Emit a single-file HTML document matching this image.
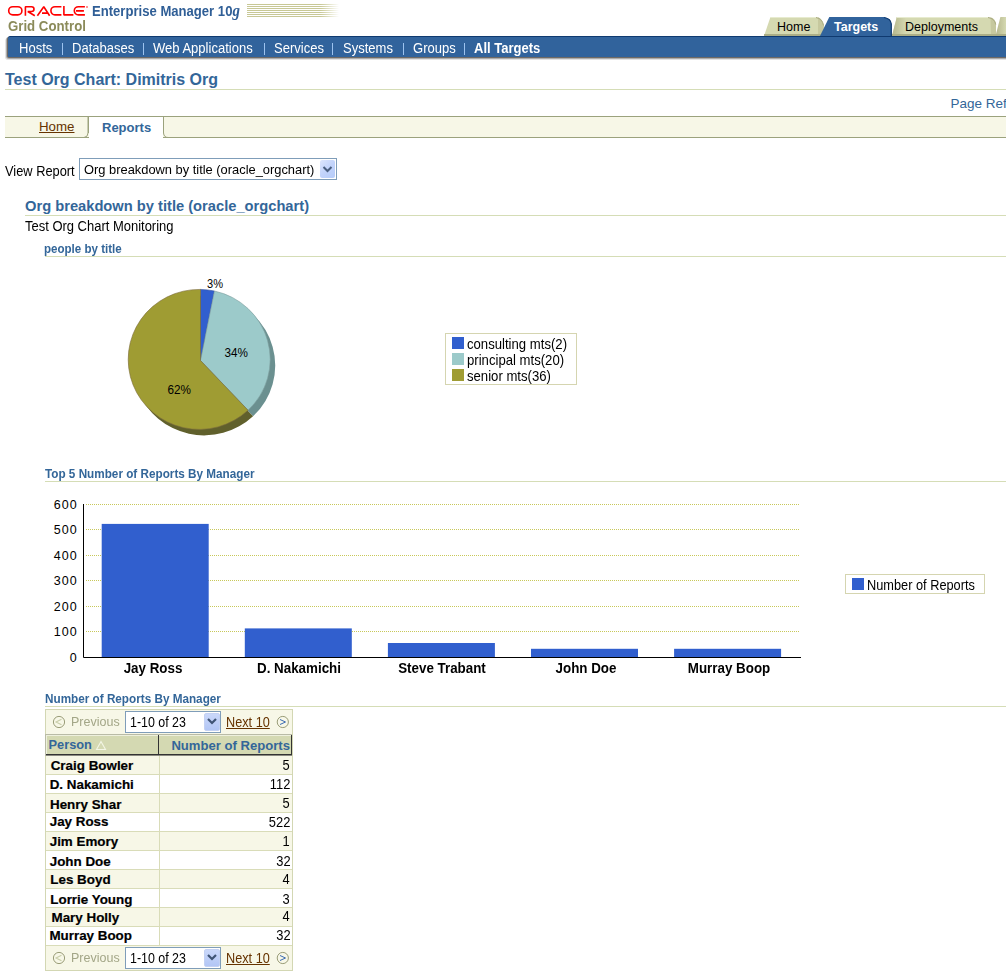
<!DOCTYPE html>
<html><head><meta charset="utf-8">
<style>
*{box-sizing:border-box}
html,body{margin:0;padding:0;background:#fff;width:1006px;height:976px;overflow:hidden;position:relative}
body{font-family:"Liberation Sans",sans-serif;font-size:13px;color:#000}
.a{position:absolute;white-space:nowrap;line-height:1}
.blue{color:#336699}
.b{font-weight:bold}
.nav{color:#fff;font-size:14px;top:41px;transform:scaleX(.93);transform-origin:0 0}
.sep{position:absolute;top:43px;width:1px;height:12px;background:#9dc3ef}
svg{position:absolute;left:0;top:0}
.pl{font-size:11.5px}
.lg{font-size:14.6px;transform:scaleX(.9);transform-origin:0 0}
.yl{font-size:12.5px;letter-spacing:1px}
.xl{font-size:14px;transform:scaleX(.955);transform-origin:50% 0}
</style></head><body>

<!-- ORACLE logo -->
<svg width="100" height="20" style="left:0;top:0">
<g stroke="#ff0000" stroke-width="1.6" fill="none" stroke-linejoin="bevel">
<rect x="8.7" y="6.7" width="13.2" height="8.2" rx="4.1"/>
<path d="M25.4 15.7 V6.7 H31.6 A2.4 2.4 0 0 1 31.6 11.5 H27.8 L34.8 15.7"/>
<path d="M37.4 15.7 L43.8 6.7 L49.6 15.7 M42 13.1 H47.6"/>
<path d="M61.4 6.7 H55 A4.1 4.1 0 0 0 55 14.9 H61.4"/>
<path d="M63.9 5.9 V14.9 H73.4"/>
<path d="M84.9 6.7 H78.4 A4.1 4.1 0 0 0 78.4 14.9 H84.9 M76 10.9 H83.9"/>
</g>
<circle cx="87" cy="7" r="0.9" fill="#ff6060"/>
</svg>
<div class="a b" style="left:92px;top:3px;font-size:14px;color:#2f5e96;transform:scaleX(.935);transform-origin:0 0">Enterprise Manager 10<i style="font-family:'Liberation Serif',serif;font-size:16px">g</i></div>
<div class="a b" style="left:8px;top:19px;font-size:14px;color:#8b8b5a;transform:scaleX(.945);transform-origin:0 0">Grid Control</div>
<!-- stripes -->
<div class="a" style="left:247px;top:4px;width:92px;height:13px;background:repeating-linear-gradient(#c8c896 0 1px,#fff 1px 2px);-webkit-mask-image:linear-gradient(90deg,#000 80%,transparent)"></div>

<!-- global tabs -->
<svg width="1006" height="60">
 <defs>
  <linearGradient id="lb" x1="0" x2="1"><stop offset="0" stop-color="#b5b68c"/><stop offset="1" stop-color="#d5d9b1"/></linearGradient>
 </defs>
 <path d="M764 36 L770.3 17.6 Q770.6 17 771.5 17 L816 17 Q822.5 18.5 823.8 25.5 L823.8 36 Z" fill="#d5d9b1"/>
 <path d="M818 17.3 Q822.5 18.5 823.8 25.5 L823.8 36 L818 36 Z" fill="#c6c89e"/>
 <path d="M816 17.5 Q822.5 18.8 823.5 25.5" stroke="#a9aa80" fill="none" stroke-width="1"/>
 <rect x="771" y="17" width="45" height="1" fill="#e7ebcf"/>
 <path d="M892 36 L896.8 17 L988 17 Q995 18.2 996 24.5 L996 36 Z" fill="#d5d9b1"/>
 <path d="M892 36 L896.8 17 L906 17 L906 36 Z" fill="url(#lb)"/>
 <path d="M990.5 17.3 Q995 18.2 996 24.5 L996 36 L991 36 Z" fill="#c6c89e"/>
 <path d="M988 17.5 Q994.8 18.5 995.7 24.5" stroke="#a9aa80" fill="none" stroke-width="1"/>
 <rect x="897" y="17" width="91" height="1" fill="#e7ebcf"/>
 <path d="M995.5 36 L1000.4 17 L1006 17 L1006 36 Z" fill="url(#lb)"/>
 <rect x="764" y="34" width="242" height="2" fill="#abae86"/>
 <path d="M820 36 L829.3 17 L884 17 Q891 18.2 891.5 24 L891.5 36 Z" fill="#31639c"/>
 <path d="M884 17.5 Q890.8 18.6 891.3 24 L891.3 36" stroke="#0f3a70" fill="none" stroke-width="1.2"/>
</svg>
<div class="a" style="left:777px;top:20.5px;font-size:12.5px">Home</div>
<div class="a b" style="left:834px;top:20.5px;font-size:12.5px;color:#fff">Targets</div>
<div class="a" style="left:905px;top:20.5px;font-size:12.5px">Deployments</div>

<!-- blue bar -->
<div class="a" style="left:5px;top:38px;width:1001px;height:22px;background:#e2e2e2;border-radius:3px 0 0 3px"></div>
<div class="a" style="left:5.5px;top:37px;width:1001px;height:22px;background:#acacac;border-radius:3px 0 0 3px"></div>
<div class="a" style="left:7px;top:37px;width:999px;height:21px;background:#6e6a66;border-radius:2px 0 0 2px"></div>
<div class="a" style="left:8px;top:36px;width:998px;height:21px;background:#31639c;border-top:1px solid #0f3a70;border-top-left-radius:2px"></div>
<div class="a nav" style="left:19px">Hosts</div>
<div class="sep" style="left:62px"></div>
<div class="a nav" style="left:72px">Databases</div>
<div class="sep" style="left:143px"></div>
<div class="a nav" style="left:153px">Web Applications</div>
<div class="sep" style="left:264px"></div>
<div class="a nav" style="left:274px">Services</div>
<div class="sep" style="left:332px"></div>
<div class="a nav" style="left:342.5px">Systems</div>
<div class="sep" style="left:403px"></div>
<div class="a nav" style="left:413px">Groups</div>
<div class="sep" style="left:464px"></div>
<div class="a nav b" style="left:474px">All Targets</div>

<!-- title -->
<div class="a b blue" style="left:5px;top:72px;font-size:16px">Test Org Chart: Dimitris Org</div>
<div class="a" style="left:5px;top:89px;width:1001px;height:1px;background:#d5ddb6"></div>
<div class="a blue" style="left:950.5px;top:97px;font-size:13.5px">Page Refresh</div>

<!-- subtabs -->
<div class="a" style="left:5px;top:116px;width:1001px;height:22px;background:#f7f7e7;border-top:1px solid #9ba27d;border-bottom:1px solid #9ba27d"></div>
<svg width="1006" height="140">
 <path d="M88 116.5 L88 133 Q88 137 84 137.5" stroke="#9ba27d" fill="none"/>
 <path d="M89 117 L163 117 L163 138 L89 138 Z" fill="#fff"/>
 <path d="M88.5 116 L88.5 133" stroke="#9ba27d"/>
 <path d="M163.5 116.5 L163.5 133 Q164 137.5 168 137.5 L1006 137.5" stroke="#9ba27d" fill="none"/>
</svg>
<div class="a" style="left:39px;top:120px;font-size:13.3px;color:#663300;text-decoration:underline">Home</div>
<div class="a b blue" style="left:102px;top:121px;font-size:13px">Reports</div>

<!-- View report -->
<div class="a" style="left:5px;top:164.5px;font-size:13.8px;transform:scaleX(.93);transform-origin:0 0">View Report</div>
<div class="a" style="left:79px;top:158px;width:258px;height:22px;border:1px solid #7f9db9;background:#fff"></div>
<div class="a" style="left:84px;top:163px;transform:scaleX(.99);transform-origin:0 0">Org breakdown by title (oracle_orgchart)</div>
<div class="a" style="left:320px;top:160px;width:15px;height:18px;background:linear-gradient(135deg,#dde6fd,#c2d3fb 50%,#b5cbf9);border-radius:2px"></div>
<svg width="340" height="180"><path d="M323.5 167 L327.5 171 L331.5 167" stroke="#4a5f80" stroke-width="2" fill="none"/></svg>

<div class="a b blue" style="left:25px;top:199px;font-size:14.7px">Org breakdown by title (oracle_orgchart)</div>
<div class="a" style="left:25px;top:215px;width:981px;height:1px;background:#d5ddb6"></div>
<div class="a" style="left:25px;top:219.5px;font-size:13.8px;transform:scaleX(.94);transform-origin:0 0">Test Org Chart Monitoring</div>

<div class="a b blue" style="left:43.5px;top:242.5px;font-size:12.5px;transform:scaleX(.925);transform-origin:0 0">people by title</div>
<div class="a" style="left:45px;top:256px;width:961px;height:1px;background:#d5ddb6"></div>

<div class="a b blue" style="left:45px;top:468px;font-size:12px;transform:scaleX(.977);transform-origin:0 0">Top 5 Number of Reports By Manager</div>
<div class="a" style="left:45px;top:481px;width:961px;height:1px;background:#d5ddb6"></div>

<div class="a b blue" style="left:45px;top:693px;font-size:12px;transform:scaleX(.977);transform-origin:0 0">Number of Reports By Manager</div>
<div class="a" style="left:45px;top:706px;width:961px;height:1px;background:#d5ddb6"></div>

<!--CHARTS-->
<svg width="600" height="450">
<path d="M205.50 366.50 L219.46 297.04 A71 70 0 0 1 253.03 416.22 Z" fill="#6b9090"/>
<path d="M205.50 366.50 L253.03 416.22 A71 70 0 1 1 204.20 295.40 Z" fill="#60602c"/>
<path d="M200.50 360.50 L200.50 289.41 A71 70 0 0 1 214.46 291.04 Z" fill="#315fce" stroke="#34509a" stroke-width="0.6"/>
<path d="M200.50 360.50 L214.46 291.04 A71 70 0 0 1 248.03 410.22 Z" fill="#9ccaca" stroke="#7c9c9c" stroke-width="0.6"/>
<path d="M200.50 360.50 L248.03 410.22 A71 70 0 1 1 200.50 289.41 Z" fill="#9f9c33" stroke="#7c6c3c" stroke-width="0.6"/>
<g font-family="Liberation Sans" font-size="13" fill="#000">
<text x="207" y="288" textLength="16" lengthAdjust="spacingAndGlyphs">3%</text>
<text x="224.5" y="357" textLength="23.5" lengthAdjust="spacingAndGlyphs">34%</text>
<text x="167.5" y="394" textLength="23.5" lengthAdjust="spacingAndGlyphs">62%</text>
</g>
</svg>
<div class="a" style="left:445px;top:333px;width:132px;height:52px;border:1px solid #d5d5b0"></div>
<div class="a" style="left:452px;top:337px;width:12px;height:12px;background:#315fce"></div>
<div class="a" style="left:452px;top:353px;width:12px;height:12px;background:#9ccaca"></div>
<div class="a" style="left:452px;top:369px;width:12px;height:12px;background:#9f9c33"></div>
<div class="a lg" style="left:467px;top:336.5px">consulting mts(2)</div>
<div class="a lg" style="left:467px;top:352.5px">principal mts(20)</div>
<div class="a lg" style="left:467px;top:368.5px">senior mts(36)</div>
<svg width="1006" height="700">
<line x1="86" y1="504.5" x2="800" y2="504.5" stroke="#c8c85a" stroke-width="1" stroke-dasharray="1 1"/>
<line x1="86" y1="529.5" x2="800" y2="529.5" stroke="#c8c85a" stroke-width="1" stroke-dasharray="1 1"/>
<line x1="86" y1="555.5" x2="800" y2="555.5" stroke="#c8c85a" stroke-width="1" stroke-dasharray="1 1"/>
<line x1="86" y1="580.5" x2="800" y2="580.5" stroke="#c8c85a" stroke-width="1" stroke-dasharray="1 1"/>
<line x1="86" y1="606.5" x2="800" y2="606.5" stroke="#c8c85a" stroke-width="1" stroke-dasharray="1 1"/>
<line x1="86" y1="631.5" x2="800" y2="631.5" stroke="#c8c85a" stroke-width="1" stroke-dasharray="1 1"/>
<rect x="101.7" y="523.9" width="107" height="133.6" fill="#315fce"/>
<rect x="244.8" y="628.4" width="107" height="29.1" fill="#315fce"/>
<rect x="387.9" y="643.0" width="107" height="14.5" fill="#315fce"/>
<rect x="531.0" y="648.8" width="107" height="8.7" fill="#315fce"/>
<rect x="674.1" y="648.8" width="107" height="8.7" fill="#315fce"/>
<path d="M83.5 504 V657.5 H801" stroke="#000" stroke-width="1" fill="none"/>
</svg>
<div class="a yl" style="right:928.3px;top:499.0px">600</div>
<div class="a yl" style="right:928.3px;top:524.0px">500</div>
<div class="a yl" style="right:928.3px;top:550.0px">400</div>
<div class="a yl" style="right:928.3px;top:575.0px">300</div>
<div class="a yl" style="right:928.3px;top:601.0px">200</div>
<div class="a yl" style="right:928.3px;top:626.0px">100</div>
<div class="a yl" style="right:928.3px;top:652.0px">0</div>
<div class="a b xl" style="left:93.2px;width:120px;text-align:center;top:660.5px">Jay Ross</div>
<div class="a b xl" style="left:239.3px;width:120px;text-align:center;top:660.5px">D. Nakamichi</div>
<div class="a b xl" style="left:382.4px;width:120px;text-align:center;top:660.5px">Steve Trabant</div>
<div class="a b xl" style="left:525.5px;width:120px;text-align:center;top:660.5px">John Doe</div>
<div class="a b xl" style="left:668.6px;width:120px;text-align:center;top:660.5px">Murray Boop</div>
<div class="a" style="left:845px;top:574px;width:140px;height:20px;border:1px solid #d5d5b0"></div>
<div class="a" style="left:852px;top:578px;width:12px;height:12px;background:#315fce"></div>
<div class="a lg" style="left:867px;top:577.5px;transform:scaleX(.875)">Number of Reports</div>
<!--/CHARTS-->
<!--TABLE-->
<div class="a" style="left:45px;top:709px;width:248px;height:262px;border:1px solid #d3d7b3;background:#f7f7e7"></div>
<div class="a" style="left:45px;top:734px;width:247px;height:22px;background:#b9bba6"></div>
<div class="a" style="left:46px;top:735px;width:246px;height:21px;background:#eef0dd"></div>
<div class="a" style="left:47px;top:736px;width:245px;height:18px;background:#d4d9b2"></div>
<div class="a" style="left:46px;top:754px;width:246px;height:1px;background:#333"></div>
<div class="a" style="left:46px;top:755px;width:246px;height:1px;background:#8a8a80"></div>
<div class="a" style="left:158px;top:735px;width:1px;height:20px;background:#333"></div>
<div class="a" style="left:291px;top:735px;width:1px;height:20px;background:#333"></div>
<div class="a b blue" style="left:48.5px;top:739px;font-size:12.8px">Person</div>
<svg width="300" height="760"><path d="M96.5 749.5 L101 741.5 L105.5 749.5 Z" fill="none" stroke="#f4f6e6" stroke-width="1.1"/></svg>
<div class="a b blue" style="right:716px;top:739px;font-size:13.1px">Number of Reports</div>
<div class="a" style="left:46px;top:756px;width:246px;height:19px;background:#f7f7e7;border-bottom:1px solid #d9dcb8"></div>
<div class="a" style="left:46px;top:775px;width:246px;height:19px;background:#fff;border-bottom:1px solid #d9dcb8"></div>
<div class="a" style="left:46px;top:794px;width:246px;height:19px;background:#f7f7e7;border-bottom:1px solid #d9dcb8"></div>
<div class="a" style="left:46px;top:813px;width:246px;height:19px;background:#fff;border-bottom:1px solid #d9dcb8"></div>
<div class="a" style="left:46px;top:832px;width:246px;height:19px;background:#f7f7e7;border-bottom:1px solid #d9dcb8"></div>
<div class="a" style="left:46px;top:851px;width:246px;height:19px;background:#fff;border-bottom:1px solid #d9dcb8"></div>
<div class="a" style="left:46px;top:870px;width:246px;height:19px;background:#f7f7e7;border-bottom:1px solid #d9dcb8"></div>
<div class="a" style="left:46px;top:889px;width:246px;height:19px;background:#fff;border-bottom:1px solid #d9dcb8"></div>
<div class="a" style="left:46px;top:908px;width:246px;height:19px;background:#f7f7e7;border-bottom:1px solid #d9dcb8"></div>
<div class="a" style="left:46px;top:927px;width:246px;height:19px;background:#fff;border-bottom:1px solid #d9dcb8"></div>
<div class="a b" style="left:50.7px;top:759.2px;font-size:13.4px;-webkit-text-stroke:0.2px #000">Craig Bowler</div>
<div class="a" style="right:715.8px;top:757.8px;font-size:14px;transform:scaleX(.92);transform-origin:100% 0">5</div>
<div class="a b" style="left:49.7px;top:778.2px;font-size:13.4px;-webkit-text-stroke:0.2px #000">D. Nakamichi</div>
<div class="a" style="right:715.8px;top:777.0px;font-size:14px;transform:scaleX(.92);transform-origin:100% 0">112</div>
<div class="a b" style="left:50.0px;top:797.9px;font-size:13.4px;-webkit-text-stroke:0.2px #000">Henry Shar</div>
<div class="a" style="right:715.8px;top:795.8px;font-size:14px;transform:scaleX(.92);transform-origin:100% 0">5</div>
<div class="a b" style="left:49.7px;top:814.7px;font-size:13.4px;-webkit-text-stroke:0.2px #000">Jay Ross</div>
<div class="a" style="right:715.8px;top:815.1px;font-size:14px;transform:scaleX(.92);transform-origin:100% 0">522</div>
<div class="a b" style="left:49.7px;top:834.8px;font-size:13.4px;-webkit-text-stroke:0.2px #000">Jim Emory</div>
<div class="a" style="right:715.8px;top:833.9px;font-size:14px;transform:scaleX(.92);transform-origin:100% 0">1</div>
<div class="a b" style="left:49.7px;top:855.1px;font-size:13.4px;-webkit-text-stroke:0.2px #000">John Doe</div>
<div class="a" style="right:715.8px;top:853.7px;font-size:14px;transform:scaleX(.92);transform-origin:100% 0">32</div>
<div class="a b" style="left:50.3px;top:873.2px;font-size:13.4px;-webkit-text-stroke:0.2px #000">Les Boyd</div>
<div class="a" style="right:715.8px;top:871.8px;font-size:14px;transform:scaleX(.92);transform-origin:100% 0">4</div>
<div class="a b" style="left:50.3px;top:893.3px;font-size:13.4px;-webkit-text-stroke:0.2px #000">Lorrie Young</div>
<div class="a" style="right:715.8px;top:891.9px;font-size:14px;transform:scaleX(.92);transform-origin:100% 0">3</div>
<div class="a b" style="left:51.5px;top:910.8px;font-size:13.4px;-webkit-text-stroke:0.2px #000">Mary Holly</div>
<div class="a" style="right:715.8px;top:909.4px;font-size:14px;transform:scaleX(.92);transform-origin:100% 0">4</div>
<div class="a b" style="left:49.4px;top:929.4px;font-size:13.4px;-webkit-text-stroke:0.2px #000">Murray Boop</div>
<div class="a" style="right:715.8px;top:928.0px;font-size:14px;transform:scaleX(.92);transform-origin:100% 0">32</div>
<div class="a" style="left:159px;top:756px;width:1px;height:189px;background:#d9dcb8"></div>
<svg width="300" height="980"><circle cx="59" cy="722" r="5.6" fill="none" stroke="#9a9d78" stroke-width="1"/><path d="M61.5 719.2 L56 722 L61.5 724.8" fill="none" stroke="#c8cda8" stroke-width="1.1"/><circle cx="282.8" cy="722" r="5.6" fill="none" stroke="#9a9d78" stroke-width="1"/><path d="M280 719.5 L285.5 722 L280 724.5" fill="none" stroke="#3a6ab0" stroke-width="1"/></svg>
<div class="a" style="left:70.8px;top:715px;font-size:13.6px;color:#a3a687;transform:scaleX(.92);transform-origin:0 0">Previous</div>
<div class="a" style="left:125px;top:711px;width:96px;height:22px;border:1px solid #7f9db9;background:#fff"></div>
<div class="a" style="left:129.5px;top:715.5px;font-size:13.8px;transform:scaleX(.9);transform-origin:0 0">1-10 of 23</div>
<div class="a" style="left:204px;top:713px;width:16px;height:18px;background:linear-gradient(#cad8fa,#b2c6f5);border:1px solid #c3d1f3;border-radius:2px"></div>
<svg width="300" height="980"><path d="M208 719 L212 723 L216 719" stroke="#3f5474" stroke-width="2.2" fill="none"/></svg>
<div class="a" style="left:226px;top:715.8px;font-size:13.8px;color:#663300;text-decoration:underline;transform:scaleX(.92);transform-origin:0 0">Next 10</div>
<svg width="300" height="980"><circle cx="59" cy="958" r="5.6" fill="none" stroke="#9a9d78" stroke-width="1"/><path d="M61.5 955.2 L56 958 L61.5 960.8" fill="none" stroke="#c8cda8" stroke-width="1.1"/><circle cx="282.8" cy="958" r="5.6" fill="none" stroke="#9a9d78" stroke-width="1"/><path d="M280 955.5 L285.5 958 L280 960.5" fill="none" stroke="#3a6ab0" stroke-width="1"/></svg>
<div class="a" style="left:70.8px;top:951px;font-size:13.6px;color:#a3a687;transform:scaleX(.92);transform-origin:0 0">Previous</div>
<div class="a" style="left:125px;top:947px;width:96px;height:22px;border:1px solid #7f9db9;background:#fff"></div>
<div class="a" style="left:129.5px;top:951.5px;font-size:13.8px;transform:scaleX(.9);transform-origin:0 0">1-10 of 23</div>
<div class="a" style="left:204px;top:949px;width:16px;height:18px;background:linear-gradient(#cad8fa,#b2c6f5);border:1px solid #c3d1f3;border-radius:2px"></div>
<svg width="300" height="980"><path d="M208 955 L212 959 L216 955" stroke="#3f5474" stroke-width="2.2" fill="none"/></svg>
<div class="a" style="left:226px;top:951.8px;font-size:13.8px;color:#663300;text-decoration:underline;transform:scaleX(.92);transform-origin:0 0">Next 10</div>
<!--/TABLE-->
</body></html>
